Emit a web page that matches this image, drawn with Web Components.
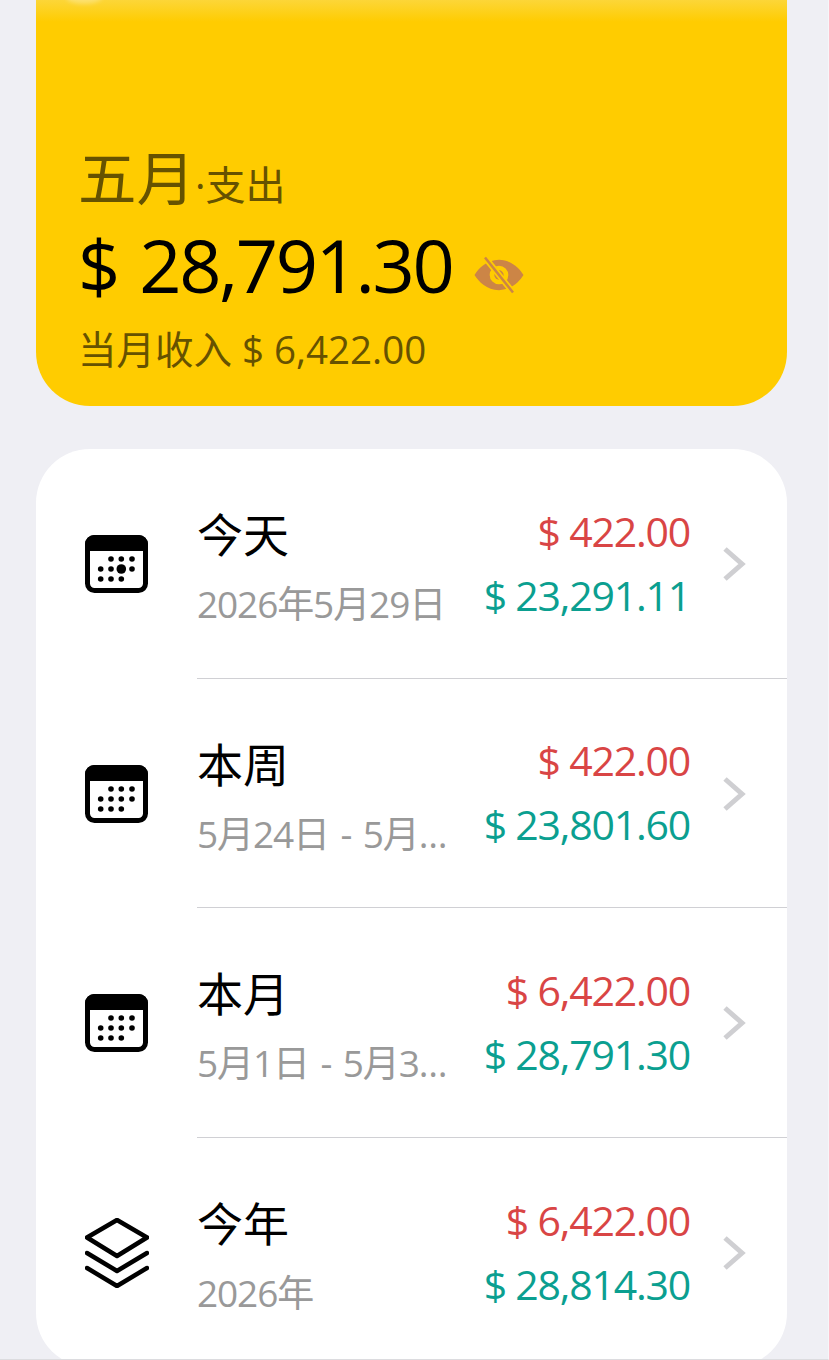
<!DOCTYPE html>
<html lang="zh-CN"><head><meta charset="utf-8"><style>
html,body{margin:0;padding:0;background:#efeff4;height:1360px;overflow:hidden}
body{font-family:"Open Sans","Noto Sans CJK SC",sans-serif}
</style></head><body>
<summary-page>
<month-card month="五月" kind="·支出" amount="$ 28,791.30" income="当月收入 $ 6,422.00"></month-card>
<period-list>
<period-row title="今天" date="2026年5月29日" out="$ 422.00" in="$ 23,291.11" icon="today"></period-row>
<period-row title="本周" date="5月24日 - 5月30日" out="$ 422.00" in="$ 23,801.60" icon="cal"></period-row>
<period-row title="本月" date="5月1日 - 5月31日" out="$ 6,422.00" in="$ 28,791.30" icon="cal"></period-row>
<period-row title="今年" date="2026年" out="$ 6,422.00" in="$ 28,814.30" icon="stack" last></period-row>
</period-list>
</summary-page>
<script>
class SummaryPage extends HTMLElement{constructor(){super();this.attachShadow({mode:'open'}).innerHTML=`<style>:host{display:flex;flex-direction:column;gap:43px;padding:0 41px 0 36px;height:1360px;overflow:hidden;box-sizing:border-box;border-right:1px solid #f6f6f9;border-bottom:1px solid #dcdcdf}</style><slot></slot>`}}
class MonthCard extends HTMLElement{constructor(){super();const a=k=>this.getAttribute(k);const s=this.attachShadow({mode:'open'});
s.innerHTML=`<style>
:host{position:relative;overflow:hidden;display:flex;flex-direction:column;justify-content:flex-end;height:406px;box-sizing:border-box;padding:0 0 29px 42px;flex:none;border-radius:0 0 54px 54px;background:linear-gradient(#fcd638 0,#ffcc00 22px);color:#000}
.spot{position:absolute;left:30px;top:-10px;width:36px;height:14px;border-radius:50%;background:rgba(255,255,255,.28);filter:blur(2px)}
.h{display:flex;align-items:baseline;color:#665200;height:72px;line-height:72px;margin-bottom:9px}
.m{font-size:58.500px}.k{font-size:40px}
.a{display:flex;align-items:center;height:86px;font-size:74px;letter-spacing:-2.400px;word-spacing:4.500px;line-height:86px;gap:19px}
.i{font-size:38.500px;color:#665200;line-height:56px;height:56px;margin-top:13px}
svg{display:block;width:56px;height:56px;margin-top:20px}
</style>
<div class="spot"></div>
<div class="h"><span class="m"></span><span class="k"></span></div>
<div class="a"><span class="v"></span><svg viewBox="0 0 24 24"><path fill="#cc8546" fill-rule="evenodd" d="M12 5.500C6.800 5.500 3.200 9.200 1.500 12c1.700 2.800 5.300 6.500 10.500 6.500s8.800-3.700 10.500-6.500C20.800 9.200 17.200 5.500 12 5.500zM12 8a4 4 0 1 1 0 8 4 4 0 0 1 0-8z"/><circle cx="12" cy="12" r="2" fill="#cc8546"/><path d="M6 4.500 18 19.500" stroke="#ffcc00" stroke-width="2.600"/><path d="M6 4.500 18 19.500" stroke="#cc8546" stroke-width="1.100"/></svg></div>
<div class="i"></div>`;
s.querySelector('.m').textContent=a('month');s.querySelector('.k').textContent=a('kind');s.querySelector('.v').textContent=a('amount');s.querySelector('.i').textContent=a('income');}}
class PeriodList extends HTMLElement{constructor(){super();this.attachShadow({mode:'open'}).innerHTML=`<style>:host{display:block;flex:none;background:#fff;border-radius:54px;height:918px;overflow:hidden}</style><slot></slot>`}}
const dots=(pts)=>pts.map(([x,y,r])=>`<circle cx="${x}" cy="${y}" r="${r||2.800}"/>`).join('');
const calBase=`<rect x="2.500" y="2.500" width="58" height="53" rx="7" fill="none" stroke="#000" stroke-width="5"/><path d="M9 0h45a9 9 0 0 1 9 9v7H0V9a9 9 0 0 1 9-9z"/>`;
const ICONS={
today:calBase+dots([[26,24],[36.300,24],[47,24],[15.700,34],[26,34],[47,34],[15.700,44],[26,44],[36.300,44],[36.300,34,4.800]]),
cal:calBase+dots([[26,24],[36.300,24],[47,24],[15.700,34],[26,34],[36.300,34],[47,34],[15.700,44],[26,44],[36.300,44]]),
stack:`<path fill="none" stroke="#000" stroke-width="4.500" stroke-linejoin="round" stroke-linecap="round" d="M32 2 62 19.500 32 38 2 19.500zM2 35l30 18 30-18M2 50l30 18 30-18"/>`};
class PeriodRow extends HTMLElement{constructor(){super();const a=k=>this.getAttribute(k);const s=this.attachShadow({mode:'open'});
s.innerHTML=`<style>
:host{display:grid;grid-template-columns:161px 1fr;height:229.500px;box-sizing:border-box}
.ic{display:flex;align-items:center;justify-content:flex-start}
.ic svg{display:block;width:64px;margin:1px 0 0 49px}
.b{display:flex;align-items:center;box-sizing:border-box;border-bottom:1.500px solid #d0d0d4;min-width:0}
:host([last]) .b{border-bottom:0}
.l{width:254px;flex:none;min-width:0;display:flex;flex-direction:column;margin-top:9px}
.t{font-size:46px;line-height:62px;color:#000;margin-top:-6px}
.d{font-size:37px;letter-spacing:-1.100px;word-spacing:3px;line-height:44px;color:#999;margin-top:17px;white-space:nowrap;overflow:hidden;text-overflow:ellipsis}
.r{flex:1;display:flex;flex-direction:column;align-items:flex-end;font-size:41px;letter-spacing:-1.200px;line-height:64px;white-space:nowrap;margin-top:-1px}
.o{color:#d94545}.n{color:#0b9f90}
.c{flex:none;width:97px;display:flex;justify-content:flex-start;padding-left:32px;box-sizing:border-box}
.c svg{display:block;width:24px;height:36px;margin-top:2px}
</style>
<div class="ic"><svg viewBox="0 0 64 ${a('icon')==='stack'?70:58}" height="${a('icon')==='stack'?70:58}">${ICONS[a('icon')]}</svg></div>
<div class="b"><div class="l"><div class="t"></div><div class="d"></div></div>
<div class="r"><div class="o"></div><div class="n"></div></div>
<div class="c"><svg viewBox="0 0 24 36"><path d="M3 3 20 18 3 33" fill="none" stroke="#cfcfd2" stroke-width="5"/></svg></div></div>`;
s.querySelector('.t').textContent=a('title');s.querySelector('.d').textContent=a('date');s.querySelector('.o').textContent=a('out');s.querySelector('.n').textContent=a('in');}}
customElements.define('summary-page',SummaryPage);customElements.define('month-card',MonthCard);customElements.define('period-list',PeriodList);customElements.define('period-row',PeriodRow);
</script></body></html>
